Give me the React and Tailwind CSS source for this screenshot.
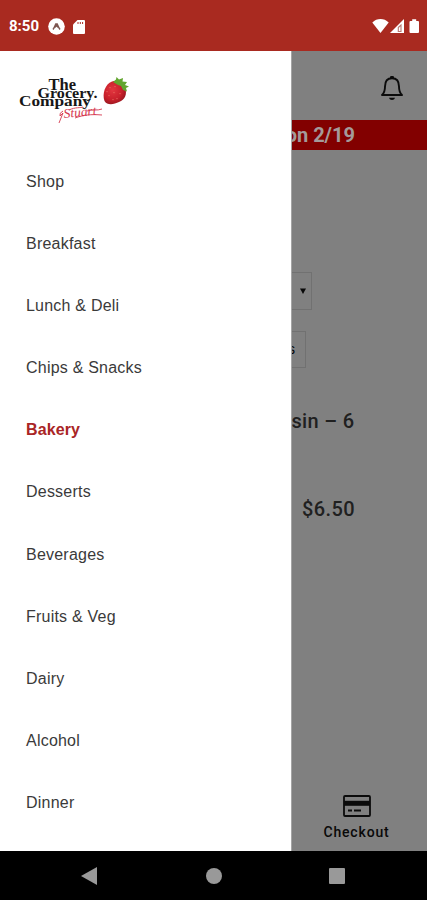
const items = ['Shop', 'Breakfast', 'Lunch & Deli', 'Chips & Snacks', 'Bakery', 'Desserts', 'Beverages', 'Fruits & Veg', 'Dairy', 'Alcohol', 'Dinner'];

function StatusBar() {
  return (
    <header className="flex h-[51px] shrink-0 items-center bg-[#a92a20] pr-[7px] pl-[9px] text-white">
      <span className="w-[39px] pt-[2px] font-['Roboto',sans-serif] text-[15px] font-bold">8:50</span>
      <svg className="mt-[2px] h-[17px] w-[17px]" viewBox="0 0 17 17">
        <circle cx="8.5" cy="8.5" r="8.3" fill="#fff" />
        <path d="M5 11.5C6.3 10 7 7.800 7.800 6h1.400c.8 1.800 1.500 4 2.800 5.500M7 9.200 8.500 7.500 10 9.200" fill="none" stroke="#7d5650" strokeWidth="1.500" />
      </svg>
      <svg className="mt-[2px] ml-[8px] h-[14px] w-[12px]" viewBox="0 0 12 14">
        <path d="M4.500 0H11a1 1 0 0 1 1 1v12a1 1 0 0 1-1 1H1a1 1 0 0 1-1-1V4.500z" fill="#fff" />
        <path d="M5 2v2M7.300 2v2M9.600 2v2" stroke="#a92a20" strokeWidth="1" />
      </svg>
      <svg className="mt-[1px] ml-auto h-[16px] w-[48px]" viewBox="0 0 48 16">
        <path d="M.3 4.500C5-.1 12-.1 16.700 4.500L8.500 15z" fill="#fff" />
        <path d="M18 15 32 1v14z" fill="#fff" />
        <path d="M26.300 9.500 29 7v6.500h-2.700z" fill="none" stroke="#b9776f" strokeWidth="1.100" />
        <path d="M38.500 3h1.700V1.300h4V3h1.800a1 1 0 0 1 1 1v10a1 1 0 0 1-1 1h-7.500a1 1 0 0 1-1-1V4a1 1 0 0 1 1-1z" fill="#fff" />
      </svg>
    </header>
  );
}

function Logo() {
  return (
    <svg className="h-[52px] w-[112px]" viewBox="0 0 112 52" role="img" aria-label="The Grocery Company">
      <defs>
        <radialGradient id="berry" cx=".4" cy=".4" r=".65">
          <stop offset="0" stopColor="#e2363f" />
          <stop offset=".65" stopColor="#c8202b" />
          <stop offset="1" stopColor="#96171f" />
        </radialGradient>
      </defs>
      <g fontFamily="'Liberation Serif', serif" fontWeight="700" fill="#171717">
        <text x="29.500" y="15.500" fontSize="17" textLength="27.500" lengthAdjust="spacingAndGlyphs">The</text>
        <text x="18.500" y="23.700" fontSize="14.500" textLength="60" lengthAdjust="spacingAndGlyphs">Grocery.</text>
        <text x="0" y="32" fontSize="14.500" textLength="72" lengthAdjust="spacingAndGlyphs">Company</text>
      </g>
      <text x="45" y="44" textLength="33" lengthAdjust="spacingAndGlyphs" transform="rotate(-6 45 44)" fontFamily="'Liberation Serif', serif" fontStyle="italic" fontSize="13" fill="#d5374d">Stuart</text>
      <path d="M44 37q-4 2-3 5l3-3-4 10M50 36c6-3 12-2 14-3M56 44c8-3 16-4 27-3M68 37c5-2 10 0 15-2" fill="none" stroke="#d5374d" strokeWidth=".9" />
      <path d="M93 7.500c5-2 11 0 13 6 2.500 7 0 12-6 14.500-5 2.500-12 3.500-14.500-1-2.500-7 .5-17 7.500-19.500z" fill="url(#berry)" />
      <path d="M91 13v1.200M95 18v1.200M90 21v1.200M98 24v1.200M101 19v1.200M96 12v1.200M94 25v1.200M88 17v1.200" stroke="#ef7f6a" strokeWidth=".8" />
      <path d="M94 8l3-2.500.5-2.500 2.500 2.500L104 4l-.5 3.500L108 8l-2 3 4 1.500-3 1.500 1 3.500-4-1.500-2-4-3-1z" fill="#62a52f" />
    </svg>
  );
}

function Drawer() {
  return (
    <aside className="flex w-[291px] shrink-0 flex-col bg-white font-['Liberation_Sans',sans-serif]">
      <div className="h-[99.600px] shrink-0 pt-[23px] pl-[19px]"><Logo /></div>
      <nav>
        {items.map((item) => (
          <a key={item} className={item === 'Bakery'
            ? 'flex h-[62.15px] items-center pl-[26px] text-[16px] font-bold tracking-[0.1px] text-[#a92525]'
            : 'flex h-[62.15px] items-center pl-[26px] text-[16px] tracking-[0.22px] text-[#3a3a3a]'}>{item}</a>
        ))}
      </nav>
    </aside>
  );
}

function Page() {
  return (
    <main className="flex min-w-0 flex-1 flex-col overflow-hidden border-l border-[#a5a5a5] bg-[#808080] font-['Roboto',sans-serif] text-[#202020]">
      <div className="flex h-[69px] shrink-0 items-center justify-end pr-[22px]">
        <svg className="mt-[4px] h-[28px] w-[26px]" viewBox="0 0 26 28" fill="none" stroke="#0b0b0b">
          <path d="M3 21c2.200-2 3-3.500 3-8.500C6 7.500 8.500 4.200 13 4.200s7 3.300 7 8.300c0 5 .8 6.500 3 8.500z" strokeWidth="1.900" strokeLinejoin="round" />
          <path d="M12.300 3.200h1.400" strokeWidth="2.600" strokeLinecap="round" />
          <path d="M10 23.800h6c-.5 1.500-1.600 2.200-3 2.200s-2.500-.7-3-2.200z" fill="#0b0b0b" stroke="none" />
        </svg>
      </div>
      <div className="flex h-[30px] shrink-0 items-center justify-end bg-[#820000] pr-[72px] text-[20px] font-bold whitespace-nowrap text-[#a49a9a]">on 2/19</div>
      <div className="mt-[122px] flex h-[38px] w-[20px] shrink-0 items-center justify-end border border-l-0 border-[#717171] pr-[5px]">
        <svg className="h-[6px] w-[6px]" viewBox="0 0 6 6"><path d="M0 .5h6L3 6z" fill="#080808" /></svg>
      </div>
      <div className="mt-[21px] flex h-[37px] w-[14px] shrink-0 items-center justify-end overflow-hidden border border-l-0 border-[#717171] pr-[10px] font-['Liberation_Sans',sans-serif] text-[14px] text-black">s</div>
      <div className="mt-[37px] flex h-[32px] shrink-0 items-center justify-end pr-[72.500px] text-[20px] font-medium tracking-[0.35px] whitespace-nowrap">sin – 6</div>
      <div className="mt-[56px] flex h-[32px] shrink-0 items-center justify-end pr-[72px] text-[20px] font-medium tracking-[0.4px]">$6.50</div>
      <div className="mt-auto flex flex-col items-center pr-[6px] pb-[10px] text-[#090909]">
        <svg className="h-[22px] w-[28px]" viewBox="0 0 28 22" fill="none" stroke="#0b0b0b">
          <rect x="1" y="1" width="26" height="20" rx="1" strokeWidth="1.800" />
          <path d="M1 8.300h26" strokeWidth="5" />
          <path d="M5 15.500h4M11 15.500h7" strokeWidth="2" />
        </svg>
        <span className="mt-[6px] text-[14px] leading-[18px] font-medium tracking-[0.85px]">Checkout</span>
      </div>
    </main>
  );
}

export default function App() {
  return (
    <div className="flex h-[900px] w-[427px] flex-col overflow-hidden bg-black">
      <StatusBar />
      <div className="flex h-[800px] shrink-0"><Drawer /><Page /></div>
      <footer className="flex h-[49px] items-center bg-black pl-[81px] text-[#999999]">
        <svg className="h-[18px] w-[16px]" viewBox="0 0 16 18"><path d="M16 0v18L0 9z" fill="currentColor" /></svg>
        <span className="ml-[109px] h-[16px] w-[16px] rounded-full bg-current" />
        <span className="ml-[107px] h-[16px] w-[16px] rounded-[1px] bg-current" />
      </footer>
    </div>
  );
}
